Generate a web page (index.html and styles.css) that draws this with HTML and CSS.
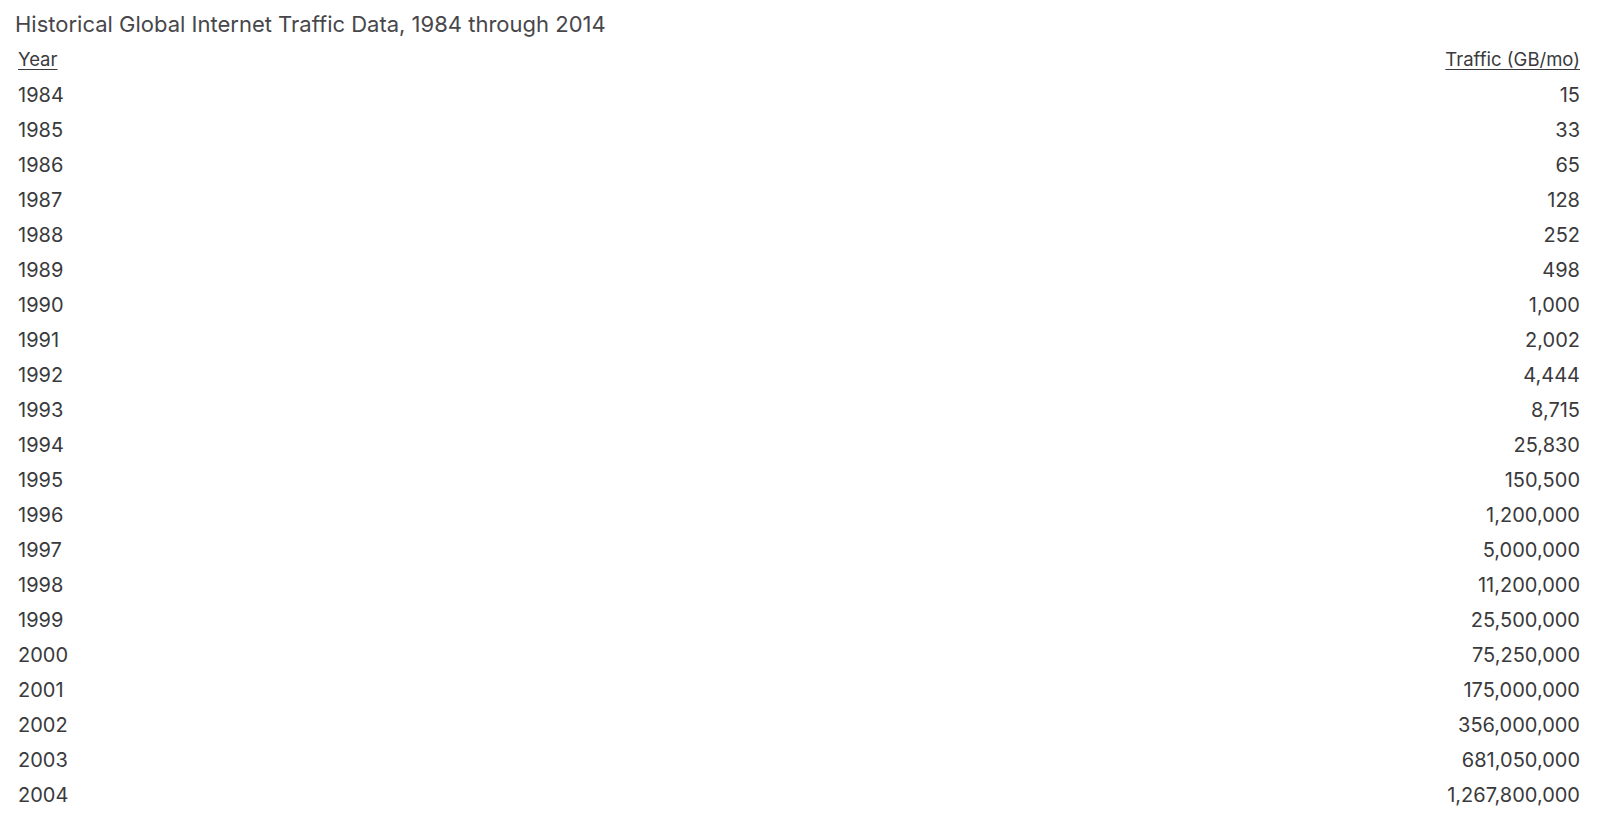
FILE: index.html
```html
<!DOCTYPE html>
<html>
<head>
<meta charset="utf-8">
<link rel="stylesheet" href="styles.css">
</head>
<body>
<div class="page">
  <h2 class="caption">Historical Global Internet Traffic Data, 1984 through 2014</h2>
  <table class="data">
    <thead>
      <tr><th class="year">Year</th><th class="num">Traffic (GB/mo)</th></tr>
    </thead>
    <tbody>
      <tr><td>1984</td><td class="num">15</td></tr>
      <tr><td>1985</td><td class="num">33</td></tr>
      <tr><td>1986</td><td class="num">65</td></tr>
      <tr><td>1987</td><td class="num">128</td></tr>
      <tr><td>1988</td><td class="num">252</td></tr>
      <tr><td>1989</td><td class="num">498</td></tr>
      <tr><td>1990</td><td class="num">1,000</td></tr>
      <tr><td>1991</td><td class="num">2,002</td></tr>
      <tr><td>1992</td><td class="num">4,444</td></tr>
      <tr><td>1993</td><td class="num">8,715</td></tr>
      <tr><td>1994</td><td class="num">25,830</td></tr>
      <tr><td>1995</td><td class="num">150,500</td></tr>
      <tr><td>1996</td><td class="num">1,200,000</td></tr>
      <tr><td>1997</td><td class="num">5,000,000</td></tr>
      <tr><td>1998</td><td class="num">11,200,000</td></tr>
      <tr><td>1999</td><td class="num">25,500,000</td></tr>
      <tr><td>2000</td><td class="num">75,250,000</td></tr>
      <tr><td>2001</td><td class="num">175,000,000</td></tr>
      <tr><td>2002</td><td class="num">356,000,000</td></tr>
      <tr><td>2003</td><td class="num">681,050,000</td></tr>
      <tr><td>2004</td><td class="num">1,267,800,000</td></tr>
    </tbody>
  </table>
</div>
</body>
</html>
```
FILE: styles.css
```css
html, body {
  margin: 0;
  padding: 0;
  background: #ffffff;
}
.page {
  padding: 9px 12px 0 15px;
  font-family: Inter, "Open Sans", sans-serif;
  color: #3a3a3c;
}
.caption {
  margin: 0 0 3px 0;
  font-size: 22px;
  font-weight: 400;
  line-height: 30px;
  color: #47474b;
}
.data {
  width: 100%;
  border-collapse: collapse;
  font-size: 20px;
}
.data th, .data td {
  height: 35px;
  padding: 0 8px 0 3px;
  text-align: left;
  font-weight: 400;
  vertical-align: middle;
  line-height: 1.2;
}
.data th {
  font-size: 18.5px;
  text-decoration: underline;
  text-decoration-thickness: 1px;
  text-underline-offset: 3px;
}
.data .num {
  text-align: right;
}
```
